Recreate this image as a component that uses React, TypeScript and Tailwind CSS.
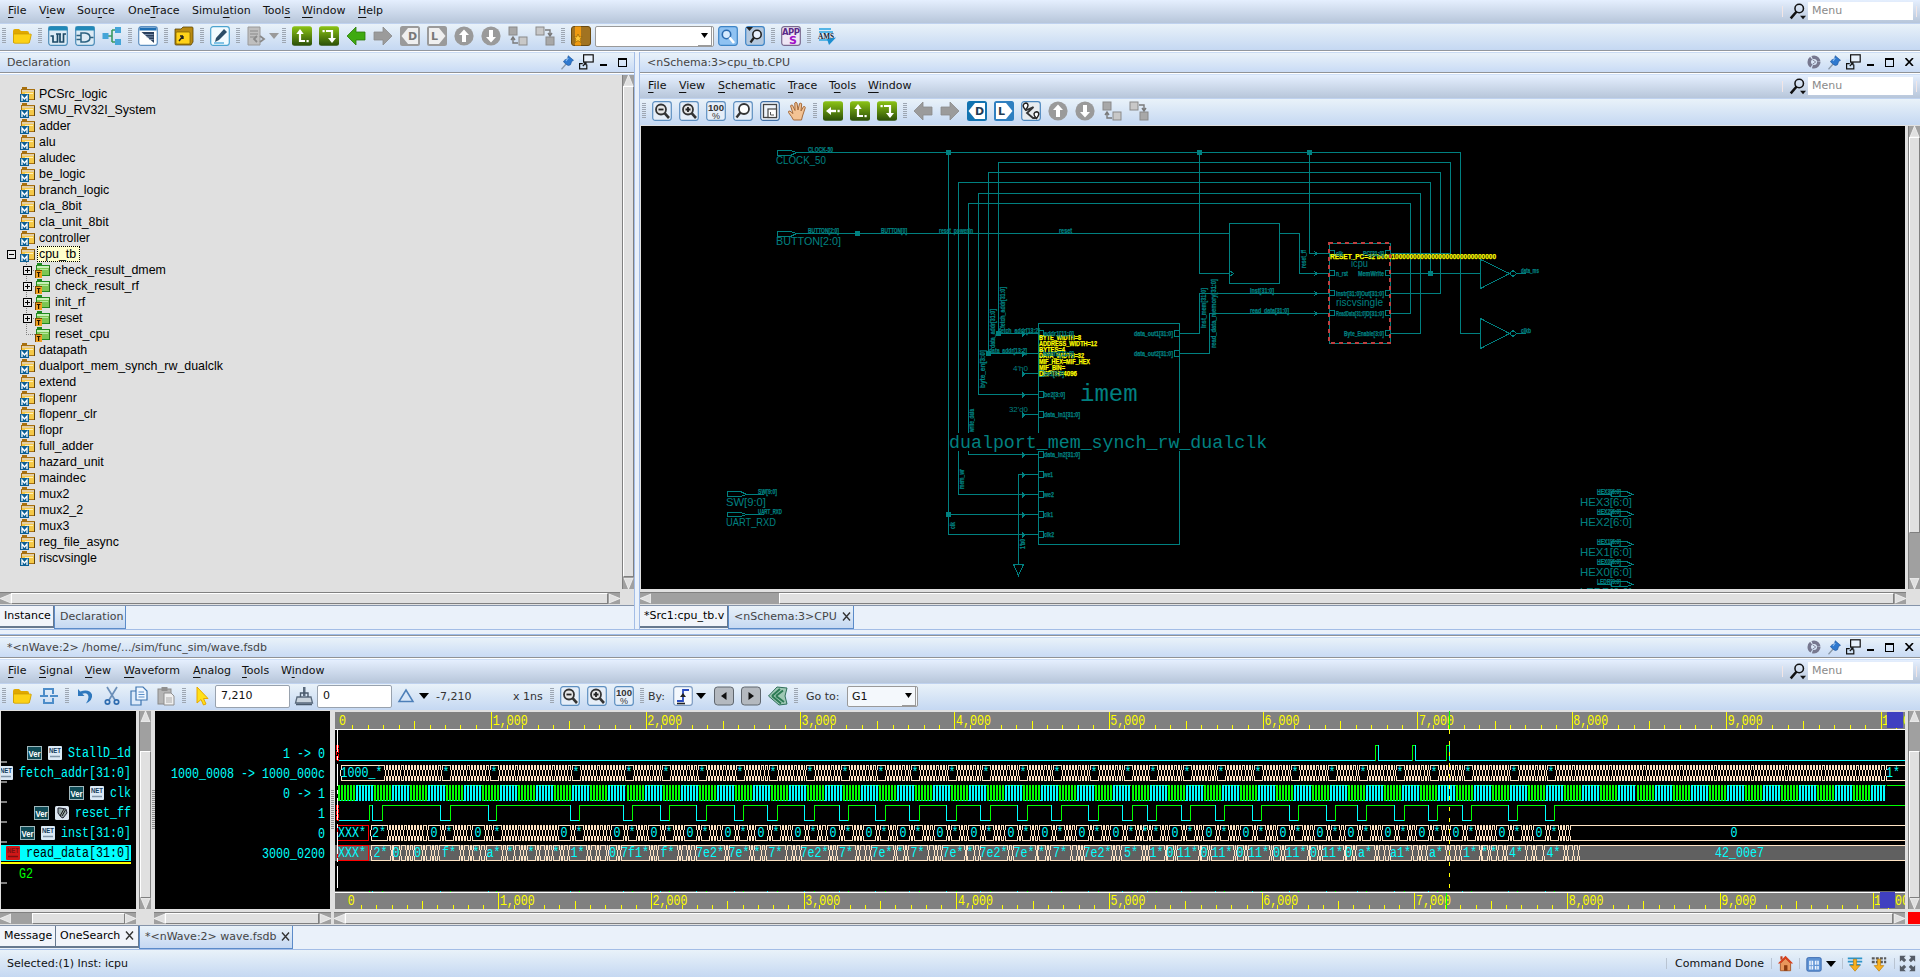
import React from "react";

/* ---------- shared icon drawing ---------- */

const TEAL = "#008080";
const CYAN = "#00ffff";
const GREEN = "#00ff00";
const PEACH = "#ffe4c4";

function Svg({ children, s = 20 }: { children: React.ReactNode; s?: number }) {
  return (
    <svg width={s} height={s} viewBox="0 0 20 20" className="block shrink-0">
      {children}
    </svg>
  );
}

function Plate({ fill = "#e6eef8", stroke = "#5d8fc0" }: { fill?: string; stroke?: string }) {
  return <rect x="0.7" y="0.7" width="18.6" height="18.6" rx="2.5" fill={fill} stroke={stroke} strokeWidth="1.2" />;
}

const GreenPlate = () => (
  <>
    <defs>
      <linearGradient id="gp" x1="0" y1="0" x2="0" y2="1">
        <stop offset="0" stopColor="#8cc414" />
        <stop offset="1" stopColor="#2a4e08" />
      </linearGradient>
    </defs>
    <rect x="0" y="0.3" width="20" height="19.4" rx="2.5" fill="url(#gp)" />
  </>
);

const ARROW_L = "M1 10L10 1V6H19V14H10V19Z";
const ARROW_R = "M19 10L10 1V6H1V14H10V19Z";

const ICONS: Record<string, React.ReactNode> = {
  folder: (
    <>
      <path d="M1 5Q1 3 3 3H7L9 5H15Q17 5 17 7V8H19.5L17.5 17H2Q1 17 1 16Z" fill="#e0a800" />
      <path d="M1.5 8H18.5Q19.5 8 19 10L17.5 16Q17.3 17.3 16 17.3H3Q1.5 17.3 1.5 16Z" fill="#fcd116" stroke="#c79a00" strokeWidth="0.7" />
    </>
  ),
  wave: (
    <>
      <Plate fill="#dcebf5" stroke="#4c8cb8" />
      <rect x="0.5" y="0.5" width="19" height="4" fill="#2089b8" />
      <path d="M2.5 10H5V16H9.5V8M12 8V16H15.5V8H18M8 8H13" fill="none" stroke="#1d4a66" strokeWidth="1.7" />
    </>
  ),
  gate: (
    <>
      <Plate fill="#dcebf5" stroke="#4c8cb8" />
      <rect x="0.5" y="0.5" width="19" height="4" fill="#2089b8" />
      <path d="M6 7H10Q15 7.5 15 11.5Q15 15.5 10 16H6ZM1.5 9.5H6M1.5 13.5H6M15 11.5H18.5" fill="none" stroke="#2b6180" strokeWidth="1.5" />
    </>
  ),
  tree: (
    <>
      <path d="M6 10H10M10 4V16M10 4H13M10 16H13" fill="none" stroke="#3a9a60" strokeWidth="1.6" />
      <rect x="0.5" y="7" width="6" height="6" fill="#45a5d8" />
      <rect x="13" y="1" width="6" height="6" fill="#45a5d8" />
      <rect x="13" y="13" width="6" height="6" fill="#45a5d8" />
    </>
  ),
  panel: (
    <>
      <Plate fill="#ffffff" stroke="#5d8fc0" />
      <rect x="1.5" y="1.5" width="17" height="3" fill="#1f6fb4" />
      <path d="M3.5 6H16V17Z" fill="#2b3f5c" />
      <path d="M6 8.5H15.5M8.5 11H15.5M11 13.5H15.5" stroke="#8fa3bf" strokeWidth="0.8" />
    </>
  ),
  openfile: (
    <>
      <path d="M1 3H7L9 1H18Q19 1 19 2V16L17 19H2Q1 19 1 18Z" fill="#b98a10" stroke="#5a4505" strokeWidth="0.8" />
      <rect x="2" y="6" width="14" height="12" rx="1" fill="#ffd21a" stroke="#7a5c00" strokeWidth="0.7" />
      <path d="M5 15L9 10M9 10H6M9 10V13" stroke="#222" strokeWidth="1.4" fill="none" />
    </>
  ),
  edit: (
    <>
      <Plate fill="#f2fbff" stroke="#4ba3cf" />
      <path d="M14 3L17 6L9 14L5 16L6 12Z" fill="#2b4c66" />
      <path d="M4 17H14" stroke="#45a5d8" strokeWidth="1.3" />
    </>
  ),
  doc: (
    <>
      <path d="M2 1H14V19H2Z" fill="#bfbfbf" stroke="#9a9a9a" />
      <path d="M4 5H12M4 8H12M4 11H10" stroke="#8a8a8a" strokeWidth="1.2" />
      <path d="M11 10L8 13L11 16M14 10L18 13L14 16" fill="none" stroke="#8a8a8a" strokeWidth="1.8" />
    </>
  ),
  gup: (
    <>
      <GreenPlate />
      <path d="M8 7V15H13" fill="none" stroke="#fff" strokeWidth="2.2" />
      <path d="M4.3 8L8 3L11.7 8Z" fill="#fff" />
      <rect x="14.5" y="14" width="2.2" height="2.2" fill="#fff" />
    </>
  ),
  gdown: (
    <>
      <GreenPlate />
      <path d="M7 5H13V13" fill="none" stroke="#fff" strokeWidth="2.2" />
      <path d="M9 12L13 17L17 12Z" fill="#fff" />
      <rect x="3.5" y="4" width="2.2" height="2.2" fill="#fff" />
    </>
  ),
  gleft: (
    <>
      <GreenPlate />
      <path d="M7 10H13" stroke="#fff" strokeWidth="2.4" />
      <path d="M8 6V14L3 10Z" fill="#fff" />
      <rect x="14.5" y="8.8" width="2.2" height="2.4" fill="#fff" />
    </>
  ),
  left: <path d={ARROW_L} fill="#3faa10" stroke="#2c7a0a" strokeWidth="0.8" />,
  leftGray: <path d={ARROW_L} fill="#9b9b9b" stroke="#8a8a8a" strokeWidth="0.8" />,
  right: <path d={ARROW_R} fill="#9b9b9b" stroke="#8a8a8a" strokeWidth="0.8" />,
  dGray: (
    <>
      <rect width="20" height="20" rx="2.5" fill="#9a9a9a" />
      <path d="M1.5 10L8 2H18V18H8Z" fill="#efefef" />
      <text x="8" y="14" fontSize="11" fontWeight="bold" fontFamily="DejaVu Sans" fill="#777">D</text>
    </>
  ),
  lGray: (
    <>
      <rect width="20" height="20" rx="2.5" fill="#9a9a9a" />
      <path d="M18.5 10L12 2H2V18H12Z" fill="#efefef" />
      <text x="4" y="14" fontSize="11" fontWeight="bold" fontFamily="DejaVu Sans" fill="#777">L</text>
    </>
  ),
  dBlue: (
    <>
      <rect width="20" height="20" rx="2.5" fill="#1273b0" />
      <path d="M1.5 10L8 2H18V18H8Z" fill="#fff" />
      <text x="8" y="14" fontSize="11" fontWeight="bold" fontFamily="DejaVu Sans" fill="#1d3b55">D</text>
    </>
  ),
  lBlue: (
    <>
      <rect width="20" height="20" rx="2.5" fill="#2e7fc0" />
      <path d="M18.5 10L12 2H2V18H12Z" fill="#fff" />
      <text x="4" y="14" fontSize="11" fontWeight="bold" fontFamily="DejaVu Sans" fill="#1d3b55">L</text>
    </>
  ),
  up: (
    <>
      <circle cx="10" cy="10" r="9.6" fill="#9a9a9a" />
      <path d="M10 3.5L15 9H12V16H8V9H5Z" fill="#fff" />
    </>
  ),
  down: (
    <>
      <circle cx="10" cy="10" r="9.6" fill="#9a9a9a" />
      <path d="M10 16.5L15 11H12V4H8V11H5Z" fill="#fff" />
    </>
  ),
  hierUp: (
    <>
      <rect x="1" y="1" width="8" height="8" fill="#a8a8a8" stroke="#8a8a8a" />
      <rect x="11" y="11" width="8" height="8" fill="#c8c8c8" stroke="#8a8a8a" />
      <path d="M5 12V17H10M3 14L5 11L7 14" fill="none" stroke="#7a7a7a" strokeWidth="1.4" />
    </>
  ),
  hierDown: (
    <>
      <rect x="1" y="1" width="8" height="8" fill="#c8c8c8" stroke="#8a8a8a" />
      <rect x="11" y="11" width="8" height="8" fill="#a8a8a8" stroke="#8a8a8a" />
      <path d="M10 4H15V9M13 7L15 10L17 7" fill="none" stroke="#7a7a7a" strokeWidth="1.4" />
    </>
  ),
  bookmark: (
    <>
      <rect x="0.5" y="0.5" width="19" height="19" rx="2.5" fill="#a17321" stroke="#6a4a10" />
      <rect x="4" y="0.5" width="6" height="19" fill="#f09a10" />
      <path d="M7 8L8.4 11H11.2L9 13L10 16.5L7 14.6L4 16.5L5 13L2.8 11H5.6Z" fill="#ffc93a" stroke="#8a5a00" strokeWidth="0.6" />
    </>
  ),
  find: (
    <>
      <Plate fill="#8fc2f2" stroke="#3d84c6" />
      <circle cx="8.5" cy="8.5" r="4.2" fill="#d7ebff" stroke="#2b6bb0" strokeWidth="1.6" />
      <path d="M11.5 11.5L16 17" stroke="#fff" strokeWidth="2.6" />
    </>
  ),
  findNext: (
    <>
      <Plate fill="#b4c8de" stroke="#3d84c6" />
      <circle cx="12" cy="8.5" r="4.2" fill="#e9f2ff" stroke="#222" strokeWidth="1.6" />
      <path d="M9 11.5L5.5 16.5" stroke="#222" strokeWidth="2.2" />
      <path d="M1 1H8L4.5 5Z" fill="#222" />
    </>
  ),
  apps: (
    <>
      <Plate fill="#efe6f5" stroke="#7a6a90" />
      <text x="1" y="9" fontSize="8.5" fontWeight="bold" fontFamily="DejaVu Sans" fill="#5a2a88" textLength="18">APP</text>
      <text x="8" y="18" fontSize="11" fontWeight="bold" fontFamily="DejaVu Sans" fill="#a010c8">S</text>
    </>
  ),
  ams: (
    <>
      <path d="M2 3H14M2 6H16M2 14H14" stroke="#55b5e6" strokeWidth="2.2" />
      <text x="1" y="13" fontSize="7.5" fontWeight="bold" fontFamily="Liberation Serif" fill="#102030" textLength="16" lengthAdjust="spacingAndGlyphs">AMS</text>
      <path d="M10 13L19 11.5L12 19Z" fill="#1c8ed0" />
    </>
  ),
  zoomOut: (
    <>
      <Plate />
      <circle cx="9" cy="8.5" r="5" fill="#e6e6e6" stroke="#333" strokeWidth="1.8" />
      <path d="M6.5 8.5H11.5" stroke="#222" strokeWidth="1.8" />
      <path d="M12.8 12.4L17 17" stroke="#333" strokeWidth="2.6" />
    </>
  ),
  zoomIn: (
    <>
      <Plate />
      <circle cx="9" cy="8.5" r="5" fill="#e6e6e6" stroke="#333" strokeWidth="1.8" />
      <path d="M6.5 8.5H11.5M9 6V11" stroke="#222" strokeWidth="1.8" />
      <path d="M12.8 12.4L17 17" stroke="#333" strokeWidth="2.6" />
    </>
  ),
  hundred: (
    <>
      <Plate />
      <text x="2" y="9.8" fontSize="9" fontWeight="bold" fontFamily="Liberation Sans" fill="#333" textLength="16" lengthAdjust="spacingAndGlyphs">100</text>
      <text x="6" y="18" fontSize="9" fontFamily="Liberation Sans" fill="#333">%</text>
    </>
  ),
  mag: (
    <>
      <Plate />
      <circle cx="11" cy="8" r="5" fill="#fff" stroke="#333" strokeWidth="1.8" />
      <path d="M7.4 11.6L3.5 16.5" stroke="#333" strokeWidth="2.4" />
    </>
  ),
  fit: (
    <>
      <Plate fill="#eef4fb" stroke="#3f6ea5" />
      <rect x="3.5" y="3.5" width="13" height="13" fill="none" stroke="#444" strokeWidth="1.3" />
      <rect x="8" y="8" width="8.5" height="8.5" fill="#fff" stroke="#444" strokeWidth="1.2" />
      <path d="M10.5 14V11M10.5 14H14" stroke="#555" strokeWidth="1" />
    </>
  ),
  hand: (
    <path d="M6.5 19Q5 16 1.5 11.5Q1 9.8 3 10L6 12.6L3.6 5Q4 3.4 5.5 4.2L8 9.5L7.8 2Q8.8 0.5 10 2L11 9L12.6 2.4Q14 1.4 14.7 3L14 10L16.5 5.6Q18 5 18.3 6.6L15.5 15L14.5 19Z" fill="#f3c394" stroke="#a56a3a" strokeWidth="1" />
  ),
  path: (
    <>
      <Plate fill="#e8ecef" stroke="#4a86bd" />
      <path d="M4.5 9Q1.8 6 2.2 4.2Q3 2 4.8 2Q7 2.2 7 4.6Q6.8 6.5 4.5 9ZM15.5 17.5Q12.8 14.6 13 12.8Q13.6 10.8 15.5 10.8Q17.8 11 17.8 13.2Q17.6 15 15.5 17.5Z" fill="#fff" stroke="#222" strokeWidth="1.4" />
      <path d="M4.5 9.5L12.5 6L6 12L12 17H15.5" fill="none" stroke="#333" strokeWidth="1.8" />
    </>
  ),
  pulse: <path d="M1 10H5V3H14V8M14 12V17H5V13M14 10H19M5 10H9M11 10H14" fill="none" stroke="#4d8dc9" strokeWidth="2" />,
  undo: <path d="M3 3V10H9.5L7.3 7.8Q13 6 13.5 11Q13.5 14 11 17.5Q18 14 17 8.5Q14.5 2.5 5.2 5.4Z" fill="#2f78bd" />,
  cut: (
    <>
      <path d="M5 1L13 14M15 1L7 14" stroke="#6b8fb8" strokeWidth="1.7" />
      <circle cx="5.5" cy="16" r="2.2" fill="none" stroke="#2f6cb0" strokeWidth="1.7" />
      <circle cx="14.5" cy="16" r="2.2" fill="none" stroke="#2f6cb0" strokeWidth="1.7" />
    </>
  ),
  copy: (
    <>
      <path d="M2 5H12V19H2Z" fill="#dceafa" stroke="#3d74b0" strokeWidth="1.2" />
      <path d="M7 1H14L18 5V14H7Z" fill="#eef6ff" stroke="#3d74b0" strokeWidth="1.2" />
      <path d="M9.5 6H15M9.5 8.5H15.5M9.5 11H15.5" stroke="#5b8fc8" strokeWidth="1" />
    </>
  ),
  paste: (
    <>
      <rect x="2" y="3" width="13" height="15" fill="#b5b5b5" stroke="#8a8a8a" />
      <rect x="5.5" y="1" width="6" height="4" fill="#8f8f8f" />
      <path d="M8 7H15L18 10V19H8Z" fill="#efefef" stroke="#8f8f8f" />
      <path d="M10 12H16M10 14H16M10 16H16" stroke="#aaa" />
    </>
  ),
  cursor: <path d="M5 1V17L9 13.5L11.5 19L14 18L11.5 12.5H16Z" fill="#ffe119" stroke="#e8a800" strokeWidth="1" />,
  stamp: (
    <>
      <path d="M9 1H11.5V10H9Z" fill="#5a6a7c" />
      <path d="M3 11H17L18.5 17H1.5Z" fill="#c9d3dd" stroke="#5a6a7c" strokeWidth="1.3" />
      <path d="M6.5 11V7H14V11M2 18.5H18" fill="none" stroke="#4a5a6c" strokeWidth="1.4" />
    </>
  ),
  delta: <path d="M10 4L17 15.5H3Z" fill="#d7e6f8" stroke="#4d7fb8" strokeWidth="1.5" />,
  edge: (
    <>
      <Plate fill="#f4f8fd" stroke="#7c9ac0" />
      <path d="M4 15H10V4H16" fill="none" stroke="#2a4cc0" strokeWidth="1.8" />
      <path d="M7 11L10 7L13 11Z" fill="#222" />
      <path d="M4 17.5H12" stroke="#222" strokeWidth="1.6" />
    </>
  ),
  prev: (
    <>
      <rect x="0.5" y="1" width="19" height="18" rx="3" fill="#b4b9bf" stroke="#5f666e" />
      <path d="M12.5 6V14L7 10Z" fill="#111" />
    </>
  ),
  next: (
    <>
      <rect x="0.5" y="1" width="19" height="18" rx="3" fill="#b4b9bf" stroke="#5f666e" />
      <path d="M7.5 6V14L13 10Z" fill="#111" />
    </>
  ),
  tag: (
    <>
      <path d="M0.5 10L9 1L19 2L17 10L19 18L11 19Z" fill="#9fc8b4" stroke="#2f6f5a" strokeWidth="1" />
      <path d="M4 10L12 3M4 10L13 17.5M8 10L15 4.5M8 10L16 16" stroke="#2c7a54" strokeWidth="2" />
    </>
  ),
  home: (
    <>
      <path d="M4 10V18.5H16V10L10 4Z" fill="#e9965a" stroke="#a05020" />
      <path d="M10 1L19 10H16L10 4.5L4 10H1Z" fill="#d8401c" />
      <rect x="8.3" y="12" width="4" height="6.5" fill="#8a3a10" />
      <rect x="4" y="1.5" width="2.5" height="4" fill="#c04020" />
    </>
  ),
  grid: (
    <>
      <rect x="1" y="2" width="18" height="17" rx="2" fill="#5f93d4" stroke="#2f5fa8" />
      <path d="M4 6H9V17H4ZM11 6H16V11H11ZM11 12.5H16V17H11Z" fill="#eef5ff" />
      <path d="M6.5 6V17M4 12H9M13.5 6V17" stroke="#5f93d4" strokeWidth="1" />
    </>
  ),
  dnBlue: (
    <>
      <path d="M1 3H19M1 7H19M3 11H17" stroke="#2f94c8" strokeWidth="2.2" />
      <path d="M8 4H12V12H16L10 19L4 12H8Z" fill="#f7b020" stroke="#b87800" strokeWidth="0.8" />
    </>
  ),
  dnGray: (
    <>
      <path d="M1 3H19M1 7.5H19" stroke="#5a5a5a" strokeWidth="3" strokeDasharray="3.6 1.5" />
      <path d="M8 4H12V12H16L10 19L4 12H8Z" fill="#f7b020" stroke="#b87800" strokeWidth="0.8" />
    </>
  ),
  expand: <path d="M1 1H8L5.8 3.2L8.5 6L6 8.5L3.2 5.8L1 8ZM19 1H12L14.2 3.2L11.5 6L14 8.5L16.8 5.8L19 8ZM1 19H8L5.8 16.8L8.5 14L6 11.5L3.2 14.2L1 12ZM19 19H12L14.2 16.8L11.5 14L14 11.5L16.8 14.2L19 12Z" fill="#555c66" />,
  gear: (
    <>
      <circle cx="10" cy="10" r="6.8" fill="none" stroke="#77788f" strokeWidth="5" strokeDasharray="12.7 1.5" />
      <path d="M8 7L12.5 10L8 13" fill="none" stroke="#77788f" strokeWidth="1.2" />
    </>
  ),
  pin: (
    <>
      <path d="M9 11L2 19" stroke="#8a98a8" strokeWidth="1.6" />
      <path d="M11 1L18 7L15.5 8.5L14 13Q11 15 9 13L5 9.5Q4 8 6.5 6.5L10 5Z" fill="#2f79cf" stroke="#174f96" strokeWidth="0.8" />
      <path d="M11 4L8 8" stroke="#8fc0f5" strokeWidth="1.4" />
    </>
  ),
  float: (
    <>
      <rect x="1" y="7" width="12" height="12" fill="#cfe2f7" />
      <rect x="7" y="1" width="12" height="9" fill="#e8f1fb" stroke="#111" strokeWidth="1.5" />
      <path d="M6 12H2V18.5H11V13M6 15L10 11M7 11H10V14" fill="none" stroke="#111" strokeWidth="1.5" />
    </>
  ),
  search: (
    <>
      <circle cx="12" cy="6.5" r="5" fill="none" stroke="#111" strokeWidth="1.8" />
      <path d="M9 10L2 18" stroke="#111" strokeWidth="3" />
      <path d="M13 15H20L16.5 19Z" fill="#111" />
    </>
  ),
};

const Cell = ({ n }: { n: string }) => (
  <div className="flex w-[27px] shrink-0 items-center justify-center">
    <Svg>{ICONS[n]}</Svg>
  </div>
);

const Handle = () => (
  <div className="flex w-[9px] shrink-0 items-center justify-center">
    <svg width="4" height="16" className="block" shapeRendering="crispEdges">
      {[0, 2, 4, 6, 8, 10, 12, 14].map((y) => (
        <rect key={y} x="0" y={y} width="4" height="1" fill="#9da6b2" />
      ))}
    </svg>
  </div>
);

const Tri = ({ fill = "#000" }: { fill?: string }) => (
  <div className="flex w-[10px] shrink-0 items-center justify-center">
    <svg width="10" height="6" className="block">
      <path d="M0 0H10L5 6Z" fill={fill} />
    </svg>
  </div>
);

const BAR = "flex h-[27px] shrink-0 items-center border-t border-[#bfd2ef] bg-linear-to-b from-[#e9f2f9] to-[#c5d8f2] pb-[2px]";
const MENUBAR = "flex h-[23px] shrink-0 items-center bg-linear-to-b from-[#e5effe] to-[#b7c6da]";

function MenuBar({ items }: { items: [string, number, string][] }) {
  return (
    <div className={MENUBAR}>
      <div className="w-[8px] shrink-0" />
      {items.map(([t, u, w]) => (
        <div key={t} className={`${w} pb-[2px]`}>
          {t.slice(0, u)}
          <span className="underline decoration-1 underline-offset-[3px]">{t[u]}</span>
          {t.slice(u + 1)}
        </div>
      ))}
      <div className="ml-auto flex h-full items-center">
        <div className="h-[11px] w-px bg-[#f2e6e6]" />
        <div className="ml-[6px] w-[19px] pb-px">
          <Svg s={17}>{ICONS.search}</Svg>
        </div>
        <div className="mb-px h-[18px] w-[105px] bg-white pl-[4px] leading-[18px] text-[#8a8a8a]">Menu</div>
        <div className="mr-[3px] ml-[3px] h-[11px] w-px bg-[#f2e6e6]" />
      </div>
    </div>
  );
}

function TitleBar({ title, full }: { title: string; full?: boolean }) {
  return (
    <div className="flex h-[23px] shrink-0 flex-col">
      <div className="flex h-[20px] items-center border-t border-[#cadcf4] bg-linear-to-b from-[#e9f2f9] to-[#c9dbf5] pb-px pl-[7px] text-[#444]">
        <span>{title}</span>
        <div className="ml-auto flex items-center">
          {full && (
            <div className="w-[20px]">
              <Svg s={14}>{ICONS.gear}</Svg>
            </div>
          )}
          <div className="w-[18px]">
            <Svg s={15}>{ICONS.pin}</Svg>
          </div>
          <div className="w-[22px]">
            <Svg s={16}>{ICONS.float}</Svg>
          </div>
          <div className="h-[2px] w-[7px] translate-y-[3px] bg-black" />
          <div className="ml-[11px] h-[9px] w-[9px] border border-t-2 border-black" />
          {full ? (
            <svg width="9" height="8" className="mr-[6px] ml-[11px] block">
              <path d="M0.5 0L8 8M8 0L0.5 8" stroke="#000" strokeWidth="1.6" />
            </svg>
          ) : (
            <div className="w-[7px]" />
          )}
        </div>
      </div>
      <div className="h-px bg-[#8f9296]" />
      <div className="h-px bg-white" />
      <div className="h-px bg-[#cfe0f8]" />
    </div>
  );
}

/* ---------- scroll bars ---------- */

const BEVEL = "border border-t-white border-l-white border-r-[#808080] border-b-[#808080] bg-[#e0e0e0]";

function ScrollArrow({ d }: { d: "u" | "d" | "l" | "r" }) {
  const p = { u: "M5.5 0L10 11H1Z", d: "M5.5 11L10 0H1Z", l: "M0 5.5L11 1V10Z", r: "M11 5.5L0 1V10Z" }[d];
  return (
    <svg width="11" height="11" className="block shrink-0 bg-[#a0a0a0]">
      <path d={p} fill="#e0e0e0" stroke="#f4f4f4" strokeWidth="0.8" />
    </svg>
  );
}

function VScroll({ before, thumb }: { before: string; thumb: string }) {
  return (
    <div className="flex w-[12px] shrink-0 flex-col border-l border-[#808080] bg-[#a0a0a0]">
      <ScrollArrow d="u" />
      <div className={before} />
      <div className={`${BEVEL} ${thumb}`} />
      <div className="flex-1" />
      <ScrollArrow d="d" />
    </div>
  );
}

function HScroll({ box, before, thumb }: { box: string; before: string; thumb: string }) {
  return (
    <div className={`flex h-[12px] shrink-0 border-t border-[#808080] bg-[#a0a0a0] ${box}`}>
      <ScrollArrow d="l" />
      <div className={before} />
      <div className={`${BEVEL} ${thumb}`} />
      <div className="flex-1" />
      <ScrollArrow d="r" />
    </div>
  );
}

/* ---------- declaration tree ---------- */

type Row = { name: string; kind: "m" | "t"; box?: "+" | "-" };
const TREE: Row[] = [
  ..."PCSrc_logic SMU_RV32I_System adder alu aludec be_logic branch_logic cla_8bit cla_unit_8bit controller"
    .split(" ")
    .map((name) => ({ name, kind: "m" as const })),
  { name: "cpu_tb", kind: "m", box: "-" },
  { name: "check_result_dmem", kind: "t", box: "+" },
  { name: "check_result_rf", kind: "t", box: "+" },
  { name: "init_rf", kind: "t", box: "+" },
  { name: "reset", kind: "t", box: "+" },
  { name: "reset_cpu", kind: "t" },
  ..."datapath dualport_mem_synch_rw_dualclk extend flopenr flopenr_clr flopr full_adder hazard_unit maindec mux2 mux2_2 mux3 reg_file_async riscvsingle"
    .split(" ")
    .map((name) => ({ name, kind: "m" as const })),
];

function FolderIcon({ kind }: { kind: "m" | "t" }) {
  const m = kind === "m";
  return (
    <svg width="16" height="16" viewBox="0 0 16 16" className="block shrink-0" shapeRendering="crispEdges">
      <path d="M2 1H7V3H15V14H1V3H2Z" fill={m ? "#a8700f" : "#1f8a1f"} />
      <rect x="2" y="4" width="12" height="2" fill={m ? "#e4cfa4" : "#c8f0b8"} />
      <rect x="2" y="6" width="12" height="7" fill={m ? "#f5c94a" : "#7cc653"} />
      <rect x="5" y="7" width="8" height="1" fill={m ? "#fff0b8" : "#b8e89a"} />
      <rect x="14" y="4" width="1" height="10" fill={m ? "#5e4612" : "#2c6a1c"} />
      <rect x="0" y="8" width={m ? 9 : 7} height="8" fill={m ? "#0b5f94" : "#7a4a00"} />
      {m ? (
        <path d="M2 15V10L4.5 13L7 10V15" fill="none" stroke="#fff" strokeWidth="1.3" shapeRendering="auto" />
      ) : (
        <>
          <rect x="0.5" y="8.5" width="6" height="7" fill="#f0a020" />
          <path d="M1.8 10.5H5.4M3.6 10.5V15" stroke="#221400" strokeWidth="1.2" shapeRendering="auto" />
        </>
      )}
    </svg>
  );
}

const ExpandBox = ({ t }: { t: "+" | "-" }) => (
  <svg width="9" height="9" className="block" shapeRendering="crispEdges">
    <rect x="0.5" y="0.5" width="8" height="8" fill="#e8e8e8" stroke="#000" />
    <rect x="2" y="4" width="5" height="1" />
    {t === "+" && <rect x="4" y="2" width="1" height="5" />}
  </svg>
);

function TreeRow({ row }: { row: Row }) {
  const child = row.kind === "t";
  return (
    <div className={`flex h-[16px] items-center ${child ? "pl-[19px]" : ""}`}>
      {child ? (
        <div className="grid h-full w-[16px] shrink-0 place-items-center">
          <svg width="16" height="16" className="col-start-1 row-start-1 block" shapeRendering="crispEdges">
            <path d={row.box ? "M7.5 0V16M8 8.5H16" : "M7.5 0V8.5H16"} stroke="#808080" strokeDasharray="1 1" fill="none" />
          </svg>
          {row.box && (
            <div className="col-start-1 row-start-1">
              <ExpandBox t={row.box} />
            </div>
          )}
        </div>
      ) : (
        <div className="flex w-[20px] shrink-0 justify-end pr-[4px]">{row.box && <ExpandBox t={row.box} />}</div>
      )}
      <FolderIcon kind={row.kind} />
      {row.box === "-" ? (
        <span className="ml-[1px] border border-dotted border-black bg-[#ffffcc] pr-[3px] pl-[1px] leading-[14px]">{row.name}</span>
      ) : (
        <span className={`${child ? "ml-[4px]" : "ml-[3px]"} leading-[16px]`}>{row.name}</span>
      )}
    </div>
  );
}

/* ---------- schematic ---------- */

type TextSpec = [x: number, yCenter: number, width: number, text: string];

function Label({ v, size, fill = TEAL, bold }: { v: TextSpec; size: number; fill?: string; bold?: boolean }) {
  return (
    <text
      x={v[0]}
      y={v[1] + size * 0.36}
      fontSize={size}
      textLength={v[2]}
      lengthAdjust="spacingAndGlyphs"
      fontFamily="Liberation Sans"
      fontWeight={bold ? "bold" : "normal"}
      fill={fill}
      stroke={bold ? fill : "none"}
      strokeWidth={0.25}
    >
      {v[3]}
    </text>
  );
}

const SMALL: TextSpec[] = [
  [808, 149.5, 25, "CLOCK-50"],
  [808, 230, 31, "BUTTON[2:0]"],
  [881, 230, 26, "BUTTON[0]"],
  [939, 230, 34, "reset_powerin"],
  [1059, 230, 13, "reset"],
  [1250, 290, 24, "Inst[31:0]"],
  [1250, 310, 39, "read_data[31:0]"],
  [999, 330, 41, "fetch_addr[13:2]"],
  [989, 350, 38, "data_addr[13:2]"],
  [1044, 333, 30, "addr1[11:0]"],
  [1044, 353, 30, "addr2[11:0]"],
  [1044, 373, 20, "be1[3:0]"],
  [1044, 394, 21, "be2[3:0]"],
  [1044, 414, 36, "data_in1[31:0]"],
  [1044, 454, 36, "data_in2[31:0]"],
  [1044, 474, 9, "we1"],
  [1044, 494, 10, "we2"],
  [1044, 514, 9, "clk1"],
  [1044, 534, 10, "clk2"],
  [1134, 333, 39, "data_out1[31:0]"],
  [1134, 353, 39, "data_out2[31:0]"],
  [1336, 253, 7, "clk"],
  [1336, 273, 12, "n_rst"],
  [1336, 293, 25, "Instr[31:0]"],
  [1336, 313, 30, "ReadData[31:0]"],
  [1363, 253, 21, "PC[31:0]"],
  [1358, 273, 26, "MemWrite"],
  [1361, 293, 23, "Out[31:0]"],
  [1366, 313, 18, "D[31:0]"],
  [1344, 333, 40, "Byte_Enable[3:0]"],
  [1521, 270, 18, "data_ms"],
  [1521, 330, 10, "clkb"],
  [758, 491, 19, "SW[9:0]"],
  [758, 511, 24, "UART_RXD"],
  [1597, 491, 24, "HEX3[6:0]"],
  [1597, 511, 24, "HEX2[6:0]"],
  [1597, 541, 24, "HEX1[6:0]"],
  [1597, 561, 24, "HEX0[6:0]"],
  [1597, 581, 24, "LEDR[9:0]"],
];

const MEDIUM: TextSpec[] = [
  [776, 159.8, 50, "CLOCK_50"],
  [776, 240.8, 65, "BUTTON[2:0]"],
  [726, 501.8, 40, "SW[9:0]"],
  [726, 521.8, 50, "UART_RXD"],
  [1580, 501.8, 52, "HEX3[6:0]"],
  [1580, 521.8, 52, "HEX2[6:0]"],
  [1580, 551.8, 52, "HEX1[6:0]"],
  [1580, 571.8, 52, "HEX0[6:0]"],
  [1580, 591.8, 52, "LEDR[9:0]"],
  [1351, 262.5, 17, "icpu"],
  [1336, 301.5, 47, "riscvsingle"],
];

/* x, bottom y, length, text */
const VERTICAL: TextSpec[] = [
  [1203, 328, 40, "Inst_mem[31:0]"],
  [1213, 348, 69, "read_data_memory[31:0]"],
  [1002, 328, 41, "fetch_addr[31:0]"],
  [992, 348, 39, "data_addr[31:0]"],
  [982, 388, 38, "byte_en[3:0]"],
  [971, 432, 23, "write_data"],
  [961, 489, 20, "mem_wr"],
  [952, 529, 7, "clk"],
  [1022, 549, 10, "1'b0"],
  [1303, 268, 18, "reset_ff"],
];

const PARAMS: TextSpec[] = [
  [1039, 337.5, 42, "BYTE_WIDTH=8"],
  [1039, 343.5, 58, "ADDRESS_WIDTH=12"],
  [1039, 349.5, 26, "BYTES=4"],
  [1039, 355.5, 45, "DATA_WIDTH=32"],
  [1039, 361.5, 51, "MIF_HEX=MIF_HEX"],
  [1039, 367.5, 26, "MIF_BIN="],
  [1039, 373.5, 38, "DEPTH=4096"],
];

const WIRES = [
  "M796 152H1460V333H1480",
  "M948 152V534H1038M948 514H1038",
  "M1199 152V273H1229M1309 152V253H1329",
  "M1038 333H998V162H1450V253H1390",
  "M1038 353H988V172H1440V293H1390",
  "M1038 494H958V182H1430V273",
  "M1038 394H978V193H1420V333H1390",
  "M1038 454H968V203H1410V313H1390",
  "M796 233H1229M1279 233H1299V273H1329",
  "M1390 273H1480",
  "M1179 333H1199V293H1329M1179 353H1209V313H1329",
  "M1024 373H1038M1024 414H1038M1038 474H1018V564",
  "M1229 223H1279V283H1229ZM1229 270L1233 273L1229 276",
  "M1038 323H1179V544H1038Z",
  "M1329 243H1390V343H1329Z",
  "M1013 564H1023L1018 575Z",
  "M1480 259L1509 273L1480 288ZM1480 318L1509 333L1480 348Z",
  "M1509 273L1512.5 270L1516 273L1512.5 276ZM1516 273H1525",
  "M1509 333L1512.5 330L1516 333L1512.5 336ZM1516 333H1525",
  "M777 150H790L796 152L790 155H777ZM777 231H790L796 233L790 236H777Z",
  "M727 491H740L746 494L740 496H727ZM746 494H763M727 512H740L746 514L740 516H727ZM746 514H763",
  ...[494, 514, 544, 564, 584].map((y) => `M1596 ${y}H1611V${y - 3}H1626L1632 ${y}L1626 ${y + 2}H1611V${y}`),
];

function Schematic() {
  const dots: [number, number][] = [
    [948, 152], [1199, 152], [1309, 152], [857, 233], [998, 333], [988, 353], [1430, 273], [948, 514],
  ];
  return (
    <svg width="1264" height="463" viewBox="641 126 1264 463" className="block shrink-0 bg-black">
      <g transform="translate(0.5 0.5)" fill="none" stroke={TEAL} shapeRendering="crispEdges">
        {WIRES.map((d) => (
          <path key={d} d={d} />
        ))}
        {[333, 353, 373, 394, 414, 454, 474, 494, 514, 534].map((y) => (
          <g key={y}>
            <rect x="1038" y={y - 3} width="5" height="6" />
            <path d={`M1023 ${y - 2}V${y + 2}M1024 ${y - 1}V${y + 1}M1022 ${y - 3}V${y + 3}`} />
          </g>
        ))}
        {[333, 353].map((y) => (
          <rect key={y} x="1174" y={y - 3} width="5" height="6" />
        ))}
        {[253, 273, 293, 313].map((y) => (
          <g key={y}>
            <rect x="1329" y={y - 3} width="5" height="5" />
            <path d={`M1314 ${y - 2}L1317 ${y}L1314 ${y + 2}`} />
          </g>
        ))}
        {[253, 273, 293, 313, 333].map((y) => (
          <rect key={y} x="1385" y={y - 3} width="5" height="5" />
        ))}
        {dots.map(([x, y]) => (
          <rect key={`${x}-${y}`} x={x - 2} y={y - 2} width="4" height="4" fill={TEAL} />
        ))}
      </g>
      <rect x="950" y="433" width="320" height="18" fill="#000" />
      {PARAMS.map((v) => (
        <Label key={v[3]} v={v} size={7} fill="#ffff00" bold />
      ))}
      <Label v={[1330, 256.5, 166, "RESET_PC=32'b00010000000000000000000000000000"]} size={7} fill="#ffff00" bold />
      {SMALL.map((v) => (
        <Label key={`${v[0]}-${v[1]}`} v={v} size={7} bold />
      ))}
      {MEDIUM.map((v) => (
        <Label key={`${v[0]}-${v[1]}`} v={v} size={11.5} />
      ))}
      <Label v={[1013, 368.5, 15, "4'h0"]} size={8} />
      <Label v={[1009, 409.5, 19, "32'd0"]} size={8} />
      {VERTICAL.map(([x, y, w, t]) => (
        <text
          key={t}
          transform={`translate(${x + 2.5} ${y}) rotate(-90)`}
          fontSize="7"
          fontWeight="bold"
          fontFamily="Liberation Sans"
          textLength={w}
          lengthAdjust="spacingAndGlyphs"
          fill={TEAL}
          stroke={TEAL}
          strokeWidth={0.25}
        >
          {t}
        </text>
      ))}
      <text x="1080" y="401" fontSize="24" fontFamily="Liberation Mono" fill={TEAL}>imem</text>
      <text x="949" y="448" fontSize="18.3" fontFamily="Liberation Mono" fill={TEAL}>dualport_mem_synch_rw_dualclk</text>
      <rect x="1329" y="243" width="61" height="100" fill="none" stroke="#c04040" strokeWidth="2" strokeDasharray="4 4" shapeRendering="crispEdges" />
    </svg>
  );
}

/* ---------- wave form ---------- */

const CLK = 3.087;
const LOWS: [number, number][] = [
  [440, 450], [488, 496], [570, 579], [623, 632], [660, 669], [696, 706], [734, 743], [767, 777], [804, 814], [839, 848],
  [875, 885], [909, 919], [946, 956], [980, 990], [1017, 1027], [1051, 1061], [1088, 1098], [1122, 1132], [1147, 1156],
  [1181, 1190], [1215, 1224], [1252, 1261], [1289, 1298], [1326, 1335], [1357, 1366], [1394, 1404], [1428, 1437],
  [1462, 1471], [1508, 1517], [1545, 1554],
];

type BusCell = { a: number; b: number; t?: string };

function fillBus(named: BusCell[], from: number, to: number, steps: number[]): BusCell[] {
  const out: BusCell[] = [];
  let x = from;
  let i = 0;
  const pad = (end: number) => {
    while (x < end) {
      const n = steps[i++ % steps.length] * CLK;
      const b = x + n > end - 2 ? end : x + n;
      out.push({ a: Math.round(x), b: Math.round(b) });
      x = b;
    }
  };
  for (const c of named) {
    pad(c.a);
    out.push({ ...c, a: Math.round(Math.max(c.a, x)) });
    x = c.b;
  }
  pad(to);
  return out;
}

const FETCH = fillBus(
  [{ a: 340, b: 385, t: "1000_*" }, ...LOWS.map(([a]) => ({ a: a + 1, b: a + 11, t: "*" })), { a: 1885, b: 1908, t: "1*" }],
  340, 1908, [1],
);

const INST = fillBus(
  [
    { a: 370, b: 388, t: "2*" },
    ...LOWS.flatMap(([a]) => {
      const off = a === 488 ? 4 : 0;
      return [
        a === 1147 ? { a: a - 5, b: a + 1, t: "*" } : { a: a - 13 - off, b: a + 1 - off, t: "0" },
        { a: a + 4, b: a + 14, t: "*" },
      ];
    }),
    { a: 1569, b: 1908 },
  ],
  370, 1908, [1],
);

const READ = fillBus(
  [
    [370, 391, "2*"], [392, 400, "0"], [413, 422, "0"], [438, 460, "f*"], [472, 480, "*"], [485, 502, "a*"], [506, 514, "*"],
    [526, 536, "*"], [552, 560, "*"], [568, 587, "1*"], [608, 617, "0"], [620, 650, "7f1*"], [657, 678, "f*"], [695, 725, "7e2*"],
    [728, 750, "7e*"], [753, 761, "*"], [765, 786, "7*"], [800, 829, "7e2*"], [836, 856, "7*"], [870, 894, "7e*"], [896, 904, "*"],
    [907, 928, "7*"], [941, 965, "7e*"], [966, 974, "*"], [979, 1008, "7e2*"], [1012, 1036, "7e*"], [1037, 1046, "*"],
    [1049, 1071, "7*"], [1083, 1112, "7e2*"], [1120, 1142, "5*"], [1148, 1165, "1*"], [1166, 1174, "0"], [1176, 1199, "11*"],
    [1200, 1208, "0"], [1210, 1234, "11*"], [1236, 1244, "0"], [1247, 1270, "11*"], [1272, 1281, "0"], [1284, 1308, "11*"],
    [1309, 1318, "0"], [1321, 1344, "11*"], [1345, 1352, "0"], [1355, 1375, "a*"], [1389, 1412, "a1*"], [1426, 1446, "a*"],
    [1460, 1480, "1*"], [1481, 1488, "*"], [1490, 1497, "*"], [1506, 1526, "4*"], [1543, 1564, "4*"], [1578, 1908, ""],
  ].map(([a, b, t]) => ({ a: a as number, b: b as number, t: t as string })),
  370, 1908, [1, 2],
);

const outline = (c: BusCell, y: number) => {
  const l = c.a + 1;
  const r = Math.max(c.b - 1, l);
  return (
    `M${l} ${y}H${r + 1}V${y + 1}H${l}ZM${l} ${y + 15}H${r + 1}V${y + 16}H${l}Z` +
    `M${l} ${y}h1v5h-1ZM${l} ${y + 11}h1v5h-1ZM${r} ${y}h1v5h-1ZM${r} ${y + 11}h1v5h-1Z` +
    `M${c.a} ${y + 5}h1v6h-1Z`
  );
};

function Mono({ x, y, t, fill = CYAN }: { x: number; y: number; t: string; fill?: string }) {
  return (
    <text x={x} y={y} fontSize="14" fontFamily="Liberation Mono" textLength={t.length * 7} lengthAdjust="spacingAndGlyphs" fill={fill}>
      {t}
    </text>
  );
}

function Bus({ cells, y }: { cells: BusCell[]; y: number }) {
  return (
    <>
      <path d={cells.map((c) => outline(c, y)).join("")} fill={PEACH} shapeRendering="crispEdges" />
      {cells
        .filter((c) => c.t)
        .map((c) => {
          const t = c.t as string;
          const x = t === "1000_*" ? 340.5 : t === "1*" && c.a > 1800 ? 1886 : (c.a + c.b) / 2 - t.length * 3.5;
          return <Mono key={c.a} x={x} y={y + 11.5} t={t} />;
        })}
    </>
  );
}

function Ruler({ y, zero, step }: { y: number; zero: number; step: number }) {
  const ticks: React.ReactNode[] = [];
  for (let i = 1; i <= 101; i++) {
    const x = Math.round(zero + (i * step) / 10);
    const h = i % 10 === 0 ? 17 : i % 5 === 0 ? 8 : 4;
    ticks.push(<rect key={i} x={x} y={y + 17 - h} width="1" height={h} fill="#ffff00" />);
  }
  return (
    <>
      <rect x="335" y={y} width="1570" height="17" fill="#808080" />
      <g shapeRendering="crispEdges">{ticks}</g>
      <Mono x={zero + 2} y={y + 12.5} t="0" fill="#ffff00" />
      {[1, 2, 3, 4, 5, 6, 7, 8, 9, 10].map((k) => (
        <Mono key={k} x={zero + k * step + 1.5} y={y + 12.5} t={`${k},000`} fill="#ffff00" />
      ))}
    </>
  );
}

function Waves() {
  const bars: React.ReactNode[] = [];
  for (let g = 0; g < 43; g++) {
    const s = Math.round(338 + g * 36.07);
    for (let k = 0; k < 12; k++) {
      const x = s + k * 3;
      if (x > 1885) break;
      const green = k < 6;
      bars.push(<rect key={x} x={x} y="785" width="2" height="16" fill={green ? GREEN : CYAN} />);
      bars.push(<rect key={`${x}j`} x={x + 2} y={green ? 800 : 785} width="1" height="1" fill={green ? CYAN : GREEN} />);
    }
  }
  const falls = [372, ...LOWS.map((l) => l[0])];
  const rises = [369, 382, ...LOWS.map((l) => l[1])];
  const spans: [number, number][] = [[369, 372]];
  let x = 382;
  for (const [a, b] of LOWS) {
    spans.push([x, a]);
    x = b;
  }
  spans.push([x, 1905]);
  return (
    <svg width="1570" height="198" viewBox="335 711 1570 198" className="block shrink-0 bg-black">
      <rect x="335" y="711" width="1570" height="1" fill="#e0e0e0" />
      <Ruler y={712} zero={337} step={154.35} />
      <rect x="335" y="729" width="1570" height="1" fill="#ffffff" />
      <g shapeRendering="crispEdges">
        <path d="M339 760.5H1375M1379 760.5H1412M1416 760.5H1446M1450 760.5H1905" stroke={CYAN} />
        <path d="M1375.5 761V745.5H1378M1412.5 761V745.5H1415M1446.5 761V745.5H1449" stroke={GREEN} fill="none" />
        <path d="M1378.5 745V761M1415.5 745V761M1449.5 745V761" stroke={CYAN} />
        <rect x="336.5" y="745.5" width="2" height="15" fill="none" stroke="#ff0000" strokeDasharray="4 1" />
        <rect x="336.5" y="805.5" width="2" height="15" fill="none" stroke="#ff0000" strokeDasharray="4 1" />
        {bars}
        <rect x="1887" y="785" width="18" height="1" fill={GREEN} />
        <path d={spans.map(([a, b]) => `M${a} 805.5H${b}`).join("")} stroke={GREEN} />
        <path d={"M339 820.5H369M372 820.5H382" + LOWS.map(([a, b]) => `M${a} 820.5H${b}`).join("")} stroke={CYAN} />
        <path d={rises.map((r) => `M${r + 0.5} 805V821`).join("")} stroke={GREEN} />
        <path d={falls.map((r) => `M${r + 0.5} 805V821`).join("")} stroke={CYAN} />
        <rect x="335" y="845" width="1570" height="16" fill="#606060" />
      </g>
      <Bus cells={FETCH} y={765} />
      <Bus cells={INST} y={825} />
      <Bus cells={READ} y={845} />
      <Mono x={1730.5} y={836.5} t="0" />
      <Mono x={1715} y={856.5} t="42_00e7" />
      <g shapeRendering="crispEdges" fill="none" stroke="#ff0000">
        <rect x="337.5" y="825.5" width="31" height="15" />
        <rect x="337.5" y="845.5" width="31" height="15" />
        <path d="M337.5 765V781" strokeDasharray="3 1" />
      </g>
      <Mono x={338} y={836.5} t="XXX*" />
      <Mono x={338} y={856.5} t="XXX*" />
      <rect x="335" y="891" width="1570" height="1" fill="#6a6a6a" />
      <g shapeRendering="crispEdges">
        {rises.map((r) => (
          <rect key={r} x={r} y="891" width="1" height="1" fill={GREEN} />
        ))}
        {falls.map((r) => (
          <rect key={r} x={r} y="891" width="1" height="1" fill={CYAN} />
        ))}
      </g>
      <Ruler y={892} zero={345.7} step={152.68} />
      <g shapeRendering="crispEdges">
        <rect x="335" y="892" width="1570" height="1" fill="#ffffff" />
        <rect x="1887" y="712" width="16" height="16" fill="#4040c0" />
        <rect x="1880" y="892" width="15" height="16" fill="#4040c0" />
        <path d="M337.5 730V889" stroke="#fff" strokeDasharray="22 4 4 4" />
        <path d="M1449.5 730V891" stroke="#ffff00" strokeDasharray="4 7" />
        <path d="M1449.5 711V729M1446.5 893V909" stroke={GREEN} />
      </g>
    </svg>
  );
}

/* ---------- signal list ---------- */

const SIGNALS: [string, boolean, string, string][] = [
  ["StallD_1d", true, "net", "1 -> 0"],
  ["fetch_addr[31:0]", false, "net", "1000_0008 -> 1000_000c"],
  ["clk", true, "net", "0 -> 1"],
  ["reset_ff", true, "reg", "1"],
  ["inst[31:0]", true, "net", "0"],
  ["read_data[31:0]", false, "red", "3000_0200"],
];

function MonoLine({ t, fill }: { t: string; fill: string }) {
  return (
    <svg width={t.length * 7} height="16" className="block shrink-0 overflow-visible">
      <Mono x={0} y={12} t={t} fill={fill} />
    </svg>
  );
}

function KindIcon({ kind }: { kind: string }) {
  if (kind === "ver")
    return (
      <svg width="15" height="14" className="block shrink-0">
        <rect x="0.5" y="0.5" width="14" height="13" fill="#0f4a55" stroke="#9fb8bd" />
        <text x="1.5" y="10.5" fontSize="9.5" fontWeight="bold" fontFamily="Liberation Sans" fill="#fff" textLength="12" lengthAdjust="spacingAndGlyphs">Ver</text>
      </svg>
    );
  if (kind === "reg")
    return (
      <svg width="14" height="14" className="block shrink-0">
        <rect width="14" height="14" rx="1.5" fill="#dbe5ef" />
        <path d="M3 2H5L11 3L12 7L8 12L6 11L3 7Z" fill="#9aa" stroke="#223" />
        <path d="M5 10L9 3M7 10L10.5 4" stroke="#111" />
      </svg>
    );
  const red = kind === "red";
  return (
    <svg width="14" height="14" className="block shrink-0">
      <rect width="14" height="14" rx="1" fill={red ? "#d01818" : "#dbe9f5"} />
      <text x="1" y="7" fontSize="7" fontWeight="bold" fontFamily="Liberation Sans" fill={red ? "#7a1010" : "#123a5c"} textLength="12" lengthAdjust="spacingAndGlyphs">NET</text>
      <path d="M2 10.5H12" stroke={red ? "#7a1010" : "#7f95a8"} strokeWidth="1.5" />
    </svg>
  );
}

function SignalPanel() {
  return (
    <div className="ml-px flex h-[198px] w-[135px] shrink-0 flex-col overflow-hidden bg-black pt-[34px]">
      {SIGNALS.map(([name, ver, kind]) => {
        const sel = kind === "red";
        return (
          <div key={name} className="flex h-[20px] shrink-0 flex-col">
            <div className={`flex h-[16px] w-[130px] shrink-0 items-center justify-end gap-[6px] ${sel ? "bg-[#00ffff]" : ""}`}>
              {ver && <KindIcon kind="ver" />}
              <KindIcon kind={kind} />
              <MonoLine t={name} fill={sel ? "#000" : CYAN} />
            </div>
            {!sel && <div className="h-[2px] w-[6px] bg-[#808080]" />}
          </div>
        );
      })}
      <div className="mt-[-3px] h-[2px] w-[130px] shrink-0 bg-[#ffff00]" />
      <div className="mt-[2px] ml-[18px] shrink-0">
        <MonoLine t="G2" fill={GREEN} />
      </div>
      <div className="h-[2px] w-[6px] bg-[#808080]" />
    </div>
  );
}

function ValuePanel() {
  return (
    <div className="flex h-[198px] w-[175px] shrink-0 flex-col items-end bg-black pt-[35px] pr-[5px]">
      {SIGNALS.map(([name, , , value]) => (
        <div key={name} className="h-[20px]">
          <MonoLine t={value} fill={CYAN} />
        </div>
      ))}
    </div>
  );
}

const Grip = ({ w }: { w: string }) => (
  <div className={`flex h-full shrink-0 items-center justify-center ${w}`}>
    <svg width="3" height="40" className="block" shapeRendering="crispEdges">
      <path d="M1.5 0V40" stroke="#909090" strokeWidth="3" strokeDasharray="1 1" />
    </svg>
  </div>
);

/* ---------- tabs ---------- */

const TABS = "flex shrink-0 items-start border-t border-[#8594aa] bg-[#eaf1fa]";
const TAB = "flex items-center gap-[5px] whitespace-nowrap border-r border-b-2 border-[#66788f] bg-[#f1f4fa] pb-px pl-[4px] text-black";
const TAB_ON = "flex items-center gap-[5px] whitespace-nowrap border-r border-b-2 border-l border-[#5b8bc9] bg-linear-to-b from-[#e9f2f9] to-[#c5d8f2] pb-[2px] pl-[5px] text-[#444]";

const Close = () => (
  <svg width="9" height="9" className="block">
    <path d="M1 0.5L8 8.5M8 0.5L1 8.5" stroke="#333" strokeWidth="1.4" />
  </svg>
);

const Sep = () => <div className="h-[11px] w-px shrink-0 bg-[#b9c4d2]" />;

export default function App() {
  return (
    <div className="flex h-[977px] w-[1920px] flex-col overflow-hidden bg-[#eaf1fa] font-['DejaVu_Sans'] text-[11px] leading-none text-[#111]">
      <MenuBar
        items={[
          ["File", 0, "w-[31px]"],
          ["View", 1, "w-[38px]"],
          ["Source", 3, "w-[51px]"],
          ["OneTrace", 3, "w-[64px]"],
          ["Simulation", 5, "w-[71px]"],
          ["Tools", 4, "w-[39px]"],
          ["Window", 0, "w-[56px]"],
          ["Help", 0, "w-[40px]"],
        ]}
      />
      <div className={BAR}>
        <div className="ml-[-1px] flex items-center">
          <Handle />
          <Cell n="folder" />
          <Handle />
          <Cell n="wave" />
          <Cell n="gate" />
          <Cell n="tree" />
          <Handle />
          <Cell n="panel" />
          <Handle />
          <Cell n="openfile" />
          <Handle />
          <Cell n="edit" />
          <Handle />
          <Cell n="doc" />
          <Tri fill="#9a9a9a" />
          <Handle />
          <Cell n="gup" />
          <Cell n="gdown" />
          <Cell n="left" />
          <Cell n="right" />
          <Cell n="dGray" />
          <Cell n="lGray" />
          <Cell n="up" />
          <Cell n="down" />
          <Cell n="hierUp" />
          <Cell n="hierDown" />
          <Handle />
          <Cell n="bookmark" />
          <div className="ml-[1px] flex h-[21px] w-[119px] items-center justify-end rounded-[2px] border border-[#9a9a9a] bg-white pr-[1px]">
            <div className="flex h-[19px] w-[14px] items-center justify-center border-r border-b border-[#9a9a9a]">
              <svg width="7" height="5" className="block">
                <path d="M0 0H7L3.5 5Z" />
              </svg>
            </div>
          </div>
          <Cell n="find" />
          <Cell n="findNext" />
          <Handle />
          <Cell n="apps" />
          <Handle />
          <Cell n="ams" />
        </div>
      </div>
      <div className="h-px shrink-0 bg-[#92979d]" />
      <div className="h-px shrink-0 bg-white" />

      <div className="flex h-[577px] shrink-0">
        <section className="flex w-[635px] shrink-0 flex-col border-r border-[#a3bde6]">
          <TitleBar title="Declaration" />
          <div className="flex h-[514px] shrink-0 bg-[#e0e0e0]">
            <div className="w-[622px] pt-[11px] font-['Liberation_Sans'] text-[12.4px] text-black">
              {TREE.map((r) => (
                <TreeRow key={r.name} row={r} />
              ))}
            </div>
            <VScroll before="h-0" thumb="h-[491px]" />
          </div>
          <div className="h-[16px] shrink-0 bg-[#e0e0e0] pt-[3px]">
            <HScroll box="w-[620px]" before="w-0" thumb="w-[597px]" />
          </div>
          <div className={`${TABS} h-[24px]`}>
            <div className={`${TAB} h-[22px] w-[54px]`}>Instance</div>
            <div className={`${TAB_ON} h-[24px] w-[72px]`}>Declaration</div>
          </div>
        </section>

        <div className="w-[4px] shrink-0" />

        <section className="flex w-[1281px] shrink-0 flex-col border-l border-[#a3bde6]">
          <TitleBar title="<nSchema:3>cpu_tb.CPU" full />
          <MenuBar
            items={[
              ["File", 0, "w-[31px]"],
              ["View", 0, "w-[39px]"],
              ["Schematic", 0, "w-[70px]"],
              ["Trace", 0, "w-[41px]"],
              ["Tools", 1, "w-[39px]"],
              ["Window", 0, "w-[60px]"],
            ]}
          />
          <div className={BAR}>
            <div className="ml-[-1px] flex items-center">
              <Handle />
              <Cell n="zoomOut" />
              <Cell n="zoomIn" />
              <Cell n="hundred" />
              <Cell n="mag" />
              <Cell n="fit" />
              <Cell n="hand" />
              <Handle />
              <Cell n="gleft" />
              <Cell n="gup" />
              <Cell n="gdown" />
              <Handle />
              <Cell n="leftGray" />
              <Cell n="right" />
              <Cell n="dBlue" />
              <Cell n="lBlue" />
              <Cell n="path" />
              <Cell n="up" />
              <Cell n="down" />
              <Cell n="hierUp" />
              <Cell n="hierDown" />
            </div>
          </div>
          <div className="h-px shrink-0 bg-[#e0e0e0]" />
          <div className="flex h-[463px] shrink-0 bg-[#e0e0e0] pl-px">
            <Schematic />
            <div className="w-[3px] shrink-0" />
            <VScroll before="h-0" thumb="h-[396px]" />
          </div>
          <div className="h-[16px] shrink-0 bg-[#e0e0e0] pt-[3px]">
            <HScroll box="w-[1266px]" before="w-[128px]" thumb="w-[1115px]" />
          </div>
          <div className={`${TABS} h-[24px]`}>
            <div className={`${TAB} h-[22px] w-[88px]`}>*Src1:cpu_tb.v</div>
            <div className={`${TAB_ON} h-[24px] w-[126px]`}>
              {"<nSchema:3>CPU"}
              <Close />
            </div>
          </div>
        </section>
      </div>

      <div className="h-px shrink-0 bg-[#a3bde6]" />
      <div className="h-[4px] shrink-0" />
      <div className="h-px shrink-0 bg-[#9dbbe8]" />
      <div className="h-px shrink-0 bg-[#8f9296]" />
      <div className="h-px shrink-0 bg-white" />

      <section className="flex shrink-0 flex-col">
        <TitleBar title="*<nWave:2> /home/.../sim/func_sim/wave.fsdb" full />
        <MenuBar
          items={[
            ["File", 0, "w-[31px]"],
            ["Signal", 0, "w-[46px]"],
            ["View", 0, "w-[39px]"],
            ["Waveform", 0, "w-[69px]"],
            ["Analog", 0, "w-[49px]"],
            ["Tools", 0, "w-[39px]"],
            ["Window", 1, "w-[60px]"],
          ]}
        />
        <div className={BAR}>
          <div className="ml-[-1px] flex items-center">
            <Handle />
            <Cell n="folder" />
            <Cell n="pulse" />
            <Handle />
            <Cell n="undo" />
            <Cell n="cut" />
            <Cell n="copy" />
            <Cell n="paste" />
            <Handle />
            <Cell n="cursor" />
            <div className="h-[23px] w-[75px] rounded-[2px] border border-[#98a2ae] bg-white pl-[5px] leading-[20px]">7,210</div>
            <Cell n="stamp" />
            <div className="h-[23px] w-[75px] rounded-[2px] border border-[#98a2ae] bg-white pl-[5px] leading-[20px]">0</div>
            <Cell n="delta" />
            <Tri />
            <div className="w-[77px] pl-[7px] text-[#333]">-7,210</div>
            <div className="w-[41px] pl-[7px] whitespace-nowrap text-[#333]">x 1ns</div>
            <Handle />
            <Cell n="zoomOut" />
            <Cell n="zoomIn" />
            <Cell n="hundred" />
            <Handle />
            <div className="w-[23px] pl-[2px] text-[#333]">By:</div>
            <Cell n="edge" />
            <Tri />
            <div className="w-[4px]" />
            <Cell n="prev" />
            <Cell n="next" />
            <Cell n="tag" />
            <Handle />
            <div className="w-[47px] pl-[6px] whitespace-nowrap text-[#333]">Go to:</div>
            <div className="flex h-[21px] w-[71px] items-center justify-between rounded-[2px] border border-[#9a9a9a] bg-[#f4f8fc] pr-[1px] pl-[4px]">
              G1
              <div className="flex h-[19px] w-[14px] items-center justify-center border-r border-b border-[#9a9a9a]">
                <svg width="7" height="5" className="block">
                  <path d="M0 0H7L3.5 5Z" />
                </svg>
              </div>
            </div>
          </div>
        </div>
        <div className="h-px shrink-0 bg-[#e0e0e0]" />
        <div className="flex h-[198px] shrink-0 bg-[#e0e0e0]">
          <SignalPanel />
          <div className="w-[3px] shrink-0" />
          <VScroll before="h-[29px]" thumb="h-[147px]" />
          <Grip w="w-[4px]" />
          <ValuePanel />
          <Grip w="w-[5px]" />
          <Waves />
          <div className="w-[3px] shrink-0" />
          <VScroll before="h-[29px]" thumb="h-[147px]" />
        </div>
        <div className="flex h-[16px] shrink-0 bg-[#e0e0e0] pt-[3px]">
          <HScroll box="w-[136px]" before="w-[21px]" thumb="w-[93px]" />
          <div className="w-[18px] shrink-0" />
          <HScroll box="w-[177px]" before="w-0" thumb="w-[154px]" />
          <div className="w-[3px] shrink-0" />
          <HScroll box="w-[1571px]" before="w-0" thumb="w-[1548px]" />
          <div className="w-[3px] shrink-0" />
          <div className="h-[12px] w-[12px] bg-[#ff0000]" />
        </div>
        <div className={`${TABS} h-[24px]`}>
          <div className={`${TAB} h-[22px] w-[56px]`}>Message</div>
          <div className={`${TAB} h-[22px] w-[83px]`}>
            OneSearch
            <Close />
          </div>
          <div className={`${TAB_ON} h-[24px] w-[154px]`}>
            {"*<nWave:2> wave.fsdb"}
            <Close />
          </div>
        </div>
      </section>

      <footer className="flex flex-1 items-center border-t border-[#a3bde6] bg-linear-to-b from-[#e9f2f9] to-[#c5d8f2] pl-[7px]">
        <span>Selected:(1) Inst: icpu</span>
        <div className="ml-auto flex items-center">
          <Sep />
          <span className="mr-[7px] ml-[8px]">Command Done</span>
          <Sep />
          <div className="mx-[5px]">
            <Svg s={17}>{ICONS.home}</Svg>
          </div>
          <Sep />
          <div className="mr-[4px] ml-[6px]">
            <Svg s={16}>{ICONS.grid}</Svg>
          </div>
          <Tri />
          <div className="w-[6px]" />
          <Sep />
          <div className="ml-[4px]">
            <Svg s={16}>{ICONS.dnBlue}</Svg>
          </div>
          <div className="mr-[7px] ml-[8px]">
            <Svg s={16}>{ICONS.dnGray}</Svg>
          </div>
          <Sep />
          <div className="mr-[4px] ml-[4px]">
            <Svg s={17}>{ICONS.expand}</Svg>
          </div>
        </div>
      </footer>
    </div>
  );
}
